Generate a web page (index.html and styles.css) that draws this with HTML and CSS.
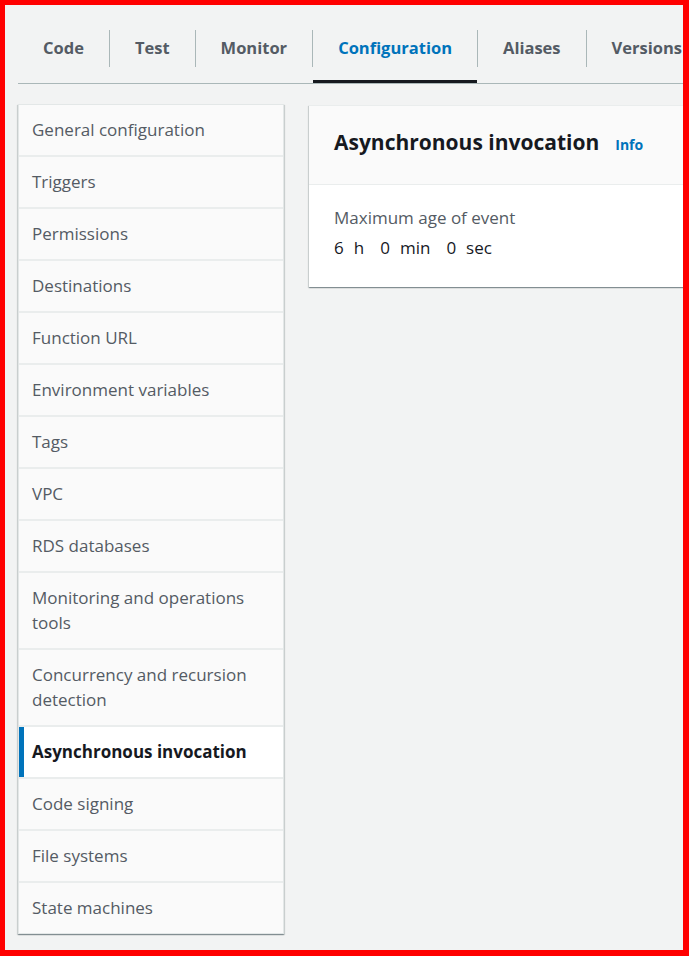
FILE: index.html
```html
<!DOCTYPE html>
<html lang="en">
<head>
<meta charset="utf-8">
<title>Lambda configuration</title>
<link rel="stylesheet" href="styles.css">
</head>
<body>
<div class="frame">
  <nav class="tabs">
    <span class="tab">Code</span>
    <span class="sep"></span>
    <span class="tab">Test</span>
    <span class="sep"></span>
    <span class="tab">Monitor</span>
    <span class="sep"></span>
    <span class="tab tab-active">Configuration</span>
    <span class="sep"></span>
    <span class="tab">Aliases</span>
    <span class="sep"></span>
    <span class="tab">Versions</span>
  </nav>
  <div class="layout">
    <ul class="sidenav">
      <li class="nav-item">General configuration</li>
      <li class="nav-item">Triggers</li>
      <li class="nav-item">Permissions</li>
      <li class="nav-item">Destinations</li>
      <li class="nav-item">Function URL</li>
      <li class="nav-item">Environment variables</li>
      <li class="nav-item">Tags</li>
      <li class="nav-item">VPC</li>
      <li class="nav-item">RDS databases</li>
      <li class="nav-item">Monitoring and operations tools</li>
      <li class="nav-item">Concurrency and recursion detection</li>
      <li class="nav-item nav-active">Asynchronous invocation</li>
      <li class="nav-item">Code signing</li>
      <li class="nav-item">File systems</li>
      <li class="nav-item">State machines</li>
    </ul>
    <section class="panel">
      <header class="panel-header">
        <h2 class="panel-title">Asynchronous invocation</h2>
        <a class="info-link">Info</a>
      </header>
      <div class="panel-body">
        <div class="kv-label">Maximum age of event</div>
        <div class="kv-value">
          <span class="num">6</span><span class="unit">h</span>
          <span class="num">0</span><span class="unit">min</span>
          <span class="num">0</span><span class="unit">sec</span>
        </div>
      </div>
    </section>
  </div>
</div>
</body>
</html>
```

FILE: styles.css
```css
* { box-sizing: border-box; }
html, body { margin: 0; padding: 0; }
body {
  font-family: "Open Sans", "Noto Sans", sans-serif;
  color: #16191f;
}
.frame {
  width: 689px;
  height: 956px;
  border-style: solid;
  border-color: #ff0000;
  border-width: 5px 6px 6px 5px;
  background: #f2f3f3;
  overflow: hidden;
  display: flex;
  flex-direction: column;
}
.tabs {
  display: flex;
  align-items: center;
  margin: 9px 0 0 13px;
  border-bottom: 1px solid #aab7b8;
  white-space: nowrap;
}
.tab {
  flex-shrink: 0;
  height: 69px;
  display: flex;
  align-items: center;
  padding: 1px 25px 0;
  font-size: 16.5px;
  font-weight: 700;
  color: #545b64;
  border-bottom: 3px solid transparent;
}
.tab-active {
  color: #0073bb;
  border-bottom-color: #16191f;
}
.sep {
  flex-shrink: 0;
  width: 1px;
  height: 37px;
  background: #aab7b8;
}
.layout {
  display: grid;
  grid-template-columns: 266px 1fr;
  column-gap: 25px;
  align-items: start;
  margin: 20px -60px 0 13px;
}
.sidenav {
  list-style: none;
  margin: 0;
  padding: 0;
  background: #fafafa;
  border: 1px solid #e3e7e7;
  box-shadow: 0 1px 1px rgba(0, 28, 36, 0.3), 1px 1px 1px rgba(0, 28, 36, 0.12), -1px 1px 1px rgba(0, 28, 36, 0.12);
}
.nav-item {
  padding: 12px 13px 13px;
  font-size: 17px;
  line-height: 25px;
  color: #545b64;
}
.nav-item + .nav-item {
  border-top: 2px solid #eaeded;
}
.nav-active {
  background: #ffffff;
  color: #16191f;
  font-weight: 700;
  box-shadow: inset 5px 0 0 #0073bb;
}
.panel {
  margin-top: 1px;
  background: #ffffff;
  box-shadow: 0 1px 1px rgba(0, 28, 36, 0.3), 1px 1px 1px rgba(0, 28, 36, 0.12), -1px 1px 1px rgba(0, 28, 36, 0.12);
  border-top: 1px solid #eaeded;
}
.panel-header {
  display: flex;
  align-items: baseline;
  padding: 21px 25px 27px;
  background: #fafafa;
  border-bottom: 1px solid #eaeded;
}
.panel-title {
  margin: 0;
  font-size: 21px;
  line-height: 30px;
  font-weight: 700;
  color: #16191f;
}
.info-link {
  margin-left: 16px;
  font-size: 14px;
  font-weight: 700;
  color: #0073bb;
}
.panel-body {
  padding: 20px 25px 27px;
}
.kv-label {
  font-size: 17px;
  line-height: 25px;
  color: #545b64;
  margin-bottom: 5px;
}
.kv-value {
  font-size: 17px;
  line-height: 25px;
  color: #16191f;
  display: flex;
}
.num { margin-right: 10px; }
.unit { margin-right: 16px; }
```
